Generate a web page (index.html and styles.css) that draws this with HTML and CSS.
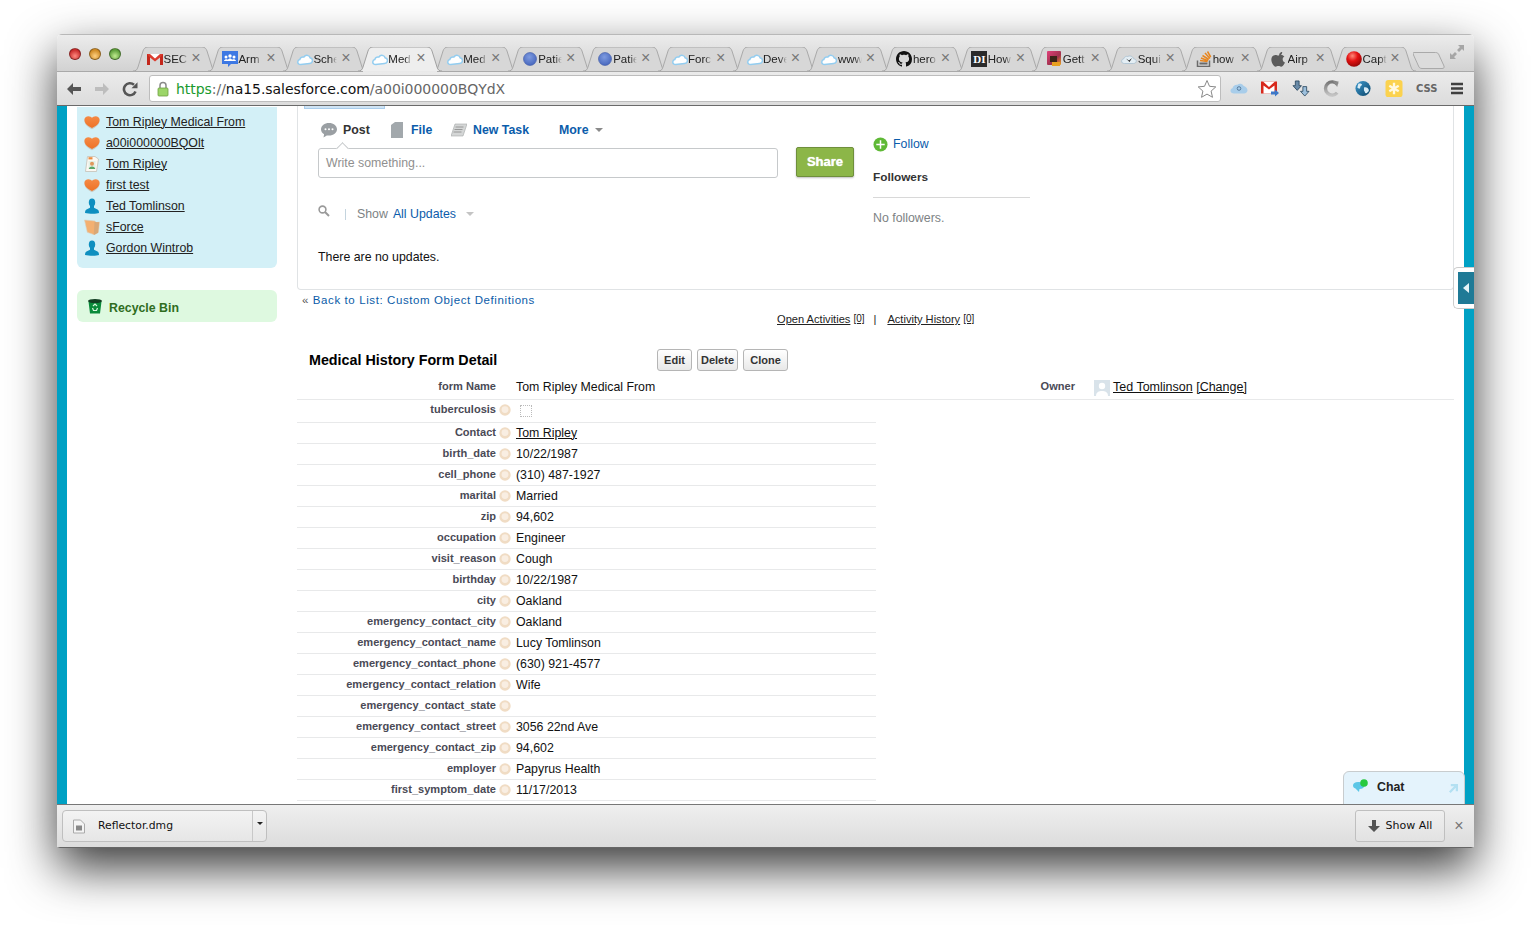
FILE: index.html
```html
<!DOCTYPE html>
<html lang="en">
<head>
<meta charset="utf-8">
<title>Medical History Form</title>
<link rel="stylesheet" href="styles.css">
</head>
<body>
<svg class="defs" aria-hidden="true">
  <defs>
    <radialGradient id="redball" cx=".4" cy=".3" r=".75"><stop offset="0" stop-color="#ff8a7a"/><stop offset=".45" stop-color="#e31212"/><stop offset="1" stop-color="#8d0505"/></radialGradient>
    <radialGradient id="blueball" cx=".45" cy=".35" r=".75"><stop offset="0" stop-color="#7e9be0"/><stop offset="1" stop-color="#3f5fb8"/></radialGradient>
    <linearGradient id="gett" x1="0" y1="0" x2="1" y2="1"><stop offset="0" stop-color="#e0407a"/><stop offset=".6" stop-color="#a0324e"/><stop offset="1" stop-color="#e8a020"/></linearGradient>
    <linearGradient id="heartg" x1="0" y1="0" x2="0" y2="1"><stop offset="0" stop-color="#f58a45"/><stop offset="1" stop-color="#ee7226"/></linearGradient>
    <linearGradient id="globeg" x1="0" y1="0" x2="1" y2="1"><stop offset="0" stop-color="#3f9bd0"/><stop offset="1" stop-color="#0a4468"/></linearGradient>
    <linearGradient id="cring" x1="0" y1="0" x2="0" y2="1"><stop offset="0" stop-color="#777"/><stop offset="1" stop-color="#c4c4c4"/></linearGradient>
    <symbol id="i-tab" viewBox="0 0 84 24"><path d="M0 24c3 0 4-1 5-4L10 4c.6-2 2-4 5-4h54c3 0 4.400 2 5 4l5 16c1 3 2 4 5 4"/></symbol>
    <symbol id="i-cloud" viewBox="0 0 16 16"><path d="M3.600 13.600C1.800 13.600.6 12.400.8 10.800c.1-1.200 1-2 2-2.200.5-1.900 2.200-3 4-2.500C7.700 4.700 9.700 3.900 11.200 4.600c1 .4 1.600 1.200 1.800 2.100 1.500.3 2.500 1.300 2.500 2.700 0 1.700-1.300 2.900-3 3.100z" fill="#fff" stroke="#93cdf0" stroke-width="1.500"/></symbol>
    <symbol id="i-gmail" viewBox="0 0 16 16"><path d="M0 3h16v11H13V6.500L8 10.500 3 6.500V14H0z" fill="#db3b2e"/><path d="M3 3h10L8 7.500z" fill="#fff"/><path d="M0 3l3 3.500V14H0zM16 3l-3 3.500V14h3z" fill="#c4271c"/></symbol>
    <symbol id="i-army" viewBox="0 0 16 16"><path d="M0 0h16v13H9l-3 3v-3H0z" fill="#3d78e3"/><circle cx="4" cy="6" r="1.500" fill="#fff"/><circle cx="8" cy="5" r="1.700" fill="#fff"/><circle cx="12" cy="6" r="1.500" fill="#fff"/><path d="M2 10c0-2 4-2 4-1 0-2 4-2 4 0 0-1 4-1 4 1z" fill="#fff"/></symbol>
    <symbol id="i-ball" viewBox="0 0 16 16"><circle cx="8" cy="8" r="6.500" fill="url(#blueball)" stroke="#3f5aa8" stroke-width=".6"/></symbol>
    <symbol id="i-github" viewBox="0 0 16 16"><path fill="#111" d="M8 0C3.580 0 0 3.580 0 8c0 3.540 2.290 6.530 5.470 7.590.4.070.55-.17.55-.38 0-.19-.01-.82-.01-1.490-2.010.37-2.530-.49-2.690-.94-.09-.23-.48-.94-.82-1.130-.28-.15-.68-.52-.01-.53.63-.01 1.080.58 1.230.82.72 1.210 1.870.87 2.330.66.07-.52.28-.87.51-1.070-1.780-.2-3.640-.89-3.640-3.950 0-.87.31-1.590.82-2.150-.08-.2-.36-1.020.08-2.120 0 0 .67-.21 2.200.82.64-.18 1.320-.27 2-.27s1.360.09 2 .27c1.530-1.040 2.200-.82 2.200-.82.44 1.100.16 1.920.08 2.120.51.56.82 1.270.82 2.150 0 3.070-1.870 3.750-3.650 3.950.29.25.54.73.54 1.480 0 1.070-.01 1.930-.01 2.200 0 .21.15.46.55.38A8.013 8.013 0 0 0 16 8c0-4.420-3.580-8-8-8z"/></symbol>
    <symbol id="i-gett" viewBox="0 0 16 16"><rect x="1" y="0" width="14" height="14" rx="1" fill="url(#gett)"/><rect x="4" y="5" width="7" height="6" fill="#3a2418"/><rect x="6" y="11" width="8" height="4" fill="#e8a020"/></symbol>
    <symbol id="i-squi" viewBox="0 0 16 16"><path d="M3.500 12.500C1.700 12.500.5 11.500.6 10c.1-1.200 1-1.900 2-2 .6-2 2.300-3 4.200-2.500 1.300-.9 3.300-.7 4.500.4.700.6 1 1.200 1.100 1.800 1.500.2 2.900 1 2.900 2.400 0 1.400-1.300 2.400-3 2.400z" fill="#e4eef4" stroke="#a8c0d0" stroke-width=".8"/><path d="M5 7.500l3 2 3-2.500-2.500 4z" fill="#222"/></symbol>
    <symbol id="i-so" viewBox="0 0 16 16"><path d="M1.500 9.500v6h12v-6" fill="none" stroke="#6a6a6a" stroke-width="1.500"/><path d="M3.500 11.500h8v2h-8z" fill="#6a6a6a"/><path d="M4 9.500l7.500 1M5 7l7 2.800M6.500 4.500l6.300 4M9 2l5 5.500M11.500.5l3.200 5.500" stroke="#e8861f" stroke-width="1.500" fill="none"/></symbol>
    <symbol id="i-apple" viewBox="0 0 16 16"><path d="M11.200 1c.1 1-.3 1.900-.8 2.500-.6.700-1.500 1.200-2.300 1.100-.1-1 .3-1.900.8-2.500C9.500 1.400 10.500.9 11.200 1zM14 11.500c-.4.900-.6 1.300-1.100 2-.7 1-1.600 2.300-2.800 2.300-1 0-1.300-.7-2.700-.7s-1.700.7-2.700.7c-1.200 0-2.100-1.100-2.800-2.200C.1 10.800-.1 7.500 1.100 5.800c.8-1.200 2.100-1.900 3.300-1.900s2 .7 3 .7 1.600-.7 3-.7c1.100 0 2.200.6 3 1.600-2.600 1.400-2.200 5.100.6 6z" fill="#5b5b5b"/></symbol>
    <symbol id="i-redball" viewBox="0 0 16 16"><circle cx="8" cy="8" r="7.800" fill="url(#redball)"/></symbol>
    <symbol id="i-heart" viewBox="0 0 18 16"><path d="M9 15.500C5 13.500.5 10.500.5 6 .5 3.500 2.500 2 5 2c1.800 0 3.200.8 4 1.800C9.800 2.800 11.200 2 13 2c2.500 0 4.500 1.500 4.500 4 0 4.500-4.500 7.500-8.500 9.500z" fill="#c9c9c0" transform="translate(0 .6)"/><path d="M9 14.800C5 13 .5 10 .5 5.500.5 3 2.500 1.500 5 1.500c1.800 0 3.200.8 4 1.800.8-1 2.200-1.800 4-1.800 2.500 0 4.500 1.500 4.500 4 0 4.500-4.500 7.500-8.500 9.300z" fill="url(#heartg)"/></symbol>
    <symbol id="i-person" viewBox="0 0 16 16"><ellipse cx="8" cy="4.500" rx="3.200" ry="4" fill="#0e8fc0"/><path d="M6 7.500h4v2.300l3.500 1.700c1 .5 1.500 1.500 1.500 3.500-2 1-10 1-14 0 0-2 .5-3 1.500-3.500L6 9.800z" fill="#0e8fc0"/></symbol>
    <symbol id="i-doc" viewBox="0 0 16 16"><path d="M3.500.5h7.500l3.500 2.500-2 12.500H1.500z" fill="#fbf8f2" stroke="#c4c0b6" stroke-width=".8"/><rect x="4.500" y="5" width="7" height="8" fill="#e4f0e6"/><circle cx="8" cy="7.800" r="2" fill="#e0985c"/><path d="M4.800 13c0-3.400 6.400-3.400 6.400 0z" fill="#5ba768"/><rect x="4.500" y="1.200" width="4" height="2.200" fill="#ee8a3c"/></symbol>
    <symbol id="i-folder" viewBox="0 0 16 16"><path d="M.5 1l10.500 1 1 1.500 3.500-.5-1.200 10.500-4 2.200-7-2.400z" fill="#f3b071" stroke="#d9cfbe" stroke-width=".6"/><path d="M10.500 3l4.500.3-1 10.400-4.200 2.200z" fill="#d9a877"/></symbol>
    <symbol id="i-bin" viewBox="0 0 16 16"><path d="M1.500 3.500h13L13 15.500H3z" fill="#0a8a3a"/><ellipse cx="8" cy="3" rx="7" ry="2" fill="#123f22"/><path d="M6 8l2-2 2 2M10.500 10l-1 2.500H6.500L5.500 10" fill="none" stroke="#d8f5dc" stroke-width="1.200"/></symbol>
    <symbol id="i-help" viewBox="0 0 12 12"><circle cx="6" cy="6" r="5.700" fill="#f0dcc4"/><circle cx="6" cy="5.600" r="3.400" fill="#f9eee2"/></symbol>
  </defs>
</svg>

<div class="window">
  <header class="tabstrip">
    <div class="lights"><span class="light red"></span><span class="light amber"></span><span class="light green"></span></div>
    <nav class="tabs">
      <div class="tab"><svg class="tab-bg"><use href="#i-tab"/></svg><svg class="fav"><use href="#i-gmail"/></svg><span class="tab-title">SEC</span><span class="tab-x">×</span></div>
      <div class="tab"><svg class="tab-bg"><use href="#i-tab"/></svg><svg class="fav"><use href="#i-army"/></svg><span class="tab-title">Arm</span><span class="tab-x">×</span></div>
      <div class="tab"><svg class="tab-bg"><use href="#i-tab"/></svg><svg class="fav"><use href="#i-cloud"/></svg><span class="tab-title">Sche</span><span class="tab-x">×</span></div>
      <div class="tab active"><svg class="tab-bg"><use href="#i-tab"/></svg><svg class="fav"><use href="#i-cloud"/></svg><span class="tab-title">Med</span><span class="tab-x">×</span></div>
      <div class="tab"><svg class="tab-bg"><use href="#i-tab"/></svg><svg class="fav"><use href="#i-cloud"/></svg><span class="tab-title">Med</span><span class="tab-x">×</span></div>
      <div class="tab"><svg class="tab-bg"><use href="#i-tab"/></svg><svg class="fav"><use href="#i-ball"/></svg><span class="tab-title">Patie</span><span class="tab-x">×</span></div>
      <div class="tab"><svg class="tab-bg"><use href="#i-tab"/></svg><svg class="fav"><use href="#i-ball"/></svg><span class="tab-title">Patie</span><span class="tab-x">×</span></div>
      <div class="tab"><svg class="tab-bg"><use href="#i-tab"/></svg><svg class="fav"><use href="#i-cloud"/></svg><span class="tab-title">Forc</span><span class="tab-x">×</span></div>
      <div class="tab"><svg class="tab-bg"><use href="#i-tab"/></svg><svg class="fav"><use href="#i-cloud"/></svg><span class="tab-title">Deve</span><span class="tab-x">×</span></div>
      <div class="tab"><svg class="tab-bg"><use href="#i-tab"/></svg><svg class="fav"><use href="#i-cloud"/></svg><span class="tab-title">www</span><span class="tab-x">×</span></div>
      <div class="tab"><svg class="tab-bg"><use href="#i-tab"/></svg><svg class="fav"><use href="#i-github"/></svg><span class="tab-title">hero</span><span class="tab-x">×</span></div>
      <div class="tab"><svg class="tab-bg"><use href="#i-tab"/></svg><span class="fav di">DI</span><span class="tab-title">How</span><span class="tab-x">×</span></div>
      <div class="tab"><svg class="tab-bg"><use href="#i-tab"/></svg><svg class="fav"><use href="#i-gett"/></svg><span class="tab-title">Gett</span><span class="tab-x">×</span></div>
      <div class="tab"><svg class="tab-bg"><use href="#i-tab"/></svg><svg class="fav"><use href="#i-squi"/></svg><span class="tab-title">Squi</span><span class="tab-x">×</span></div>
      <div class="tab"><svg class="tab-bg"><use href="#i-tab"/></svg><svg class="fav"><use href="#i-so"/></svg><span class="tab-title">how</span><span class="tab-x">×</span></div>
      <div class="tab"><svg class="tab-bg"><use href="#i-tab"/></svg><svg class="fav"><use href="#i-apple"/></svg><span class="tab-title">Airp</span><span class="tab-x">×</span></div>
      <div class="tab"><svg class="tab-bg"><use href="#i-tab"/></svg><svg class="fav"><use href="#i-redball"/></svg><span class="tab-title">Capt</span><span class="tab-x">×</span></div>
      <svg class="newtab" viewBox="0 0 32 17"><path d="M.5.500h22c2 0 3 1 3.500 2.500l5 11c.5 1.500 0 2.500-2 2.500H9c-2 0-3-1-3.500-2.500L.5 3C0 1.500 0 .5.500.5z"/></svg>
    </nav>
    <svg class="fullscreen" viewBox="0 0 14 14"><path d="M14 0v6l-2-2-3 3-2-2 3-3-2-2zM0 14V8l2 2 3-3 2 2-3 3 2 2z"/></svg>
  </header>

  <div class="toolbar">
    <svg class="tb-btn" viewBox="0 0 16 16"><path d="M1 8l6-6v4h8v4H7v4z" fill="#555"/></svg>
    <svg class="tb-btn" viewBox="0 0 16 16"><path d="M15 8L9 2v4H1v4h8v4z" fill="#bdbdbd"/></svg>
    <svg class="tb-btn" viewBox="0 0 16 16"><path d="M13.500 10.500A6 6 0 1 1 12 3.800" fill="none" stroke="#555" stroke-width="2.600"/><path d="M9.500 7.200h6V1.200z" fill="#555"/></svg>
    <div class="omnibox">
      <svg class="lock" viewBox="0 0 12 16"><path d="M3 7V4.500a3 3 0 0 1 6 0V7" fill="none" stroke="#8a8a8a" stroke-width="1.500"/><rect x="1" y="7" width="10" height="8" rx="1" fill="#9bd568" stroke="#6fa043" stroke-width=".8"/></svg>
      <div class="url"><span class="scheme">https</span><span class="dim">://</span>na15.salesforce.com<span class="dim">/a00i000000BQYdX</span></div>
      <svg class="star" viewBox="0 0 20 20"><path d="M10 1.500l2.500 5.800 6.300.6-4.700 4.200 1.400 6.200-5.500-3.200-5.500 3.200 1.400-6.200L1.200 7.900l6.300-.6z" fill="#fff" stroke="#888" stroke-width="1"/></svg>
    </div>
    <div class="extensions">
      <svg class="ext" viewBox="0 0 18 14"><path d="M4 12c-2 0-3.500-1-3.500-2.800C.5 7.800 1.500 7 2.500 6.800 3 4.500 5 3 7.500 3.300 9 1.800 12 2 13.500 4.200 15.500 5 17.500 6.500 17.500 8.800c0 2-1.500 3.200-3.500 3.200z" fill="#a8cdea"/><circle cx="9" cy="7" r="1.800" fill="none" stroke="#4f7395" stroke-width=".9"/></svg>
      <svg class="ext" viewBox="0 0 18 16"><rect x="0" y="1" width="16" height="12" fill="#d8281c"/><path d="M2 1h12L8 6.500zM2.500 5L8 9l5.500-4v8h-11z" fill="#fff"/><path d="M10 11h4V9l4 3.500-4 3.500v-2h-4z" fill="#3d78c8"/></svg>
      <svg class="ext" viewBox="0 0 18 18"><path d="M3 1h4v5h2.500L5 11 .5 6H3z" fill="#6a8ba8" stroke="#1c3a52" stroke-width=".8"/><path d="M11 7h4v5h2.500L13 17l-4.500-5H11z" fill="#9dc0dd" stroke="#1c3a52" stroke-width=".8"/></svg>
      <svg class="ext" viewBox="0 0 18 18"><path d="M14.500 4.500A7 7 0 1 0 14.500 13.500" fill="none" stroke="url(#cring)" stroke-width="3.600"/><path d="M10 1l6 .5-1.500 6z" fill="#8a8a8a"/></svg>
      <svg class="ext" viewBox="0 0 18 18"><circle cx="9" cy="9" r="8" fill="url(#globeg)"/><path d="M4 4c2-1 4 0 4 1s-2 1-2 3-2 1-3 0zM10 8c2-1 4 0 5 2s-2 4-3 4-1-2-2-3z" fill="#d8ecf6"/></svg>
      <svg class="ext" viewBox="0 0 18 18"><rect width="18" height="18" rx="3" fill="#fbd24e"/><path d="M9 3v12M4 6l10 6M14 6L4 12" stroke="#fff8df" stroke-width="2.500"/></svg>
      <span class="ext ext-css">CSS</span>
      <svg class="ext ext-menu" viewBox="0 0 14 14"><path d="M1 2.500h12M1 7h12M1 11.500h12" stroke="#3f3f3f" stroke-width="2.400"/></svg>
    </div>
  </div>

  <main class="viewport">
    <div class="stripe"></div>
    <div class="page">
      <aside class="sidebar">
        <ul class="recent">
          <li><svg class="ri"><use href="#i-heart"/></svg><a>Tom Ripley Medical From</a></li>
          <li><svg class="ri"><use href="#i-heart"/></svg><a>a00i000000BQOlt</a></li>
          <li><svg class="ri"><use href="#i-doc"/></svg><a>Tom Ripley</a></li>
          <li><svg class="ri"><use href="#i-heart"/></svg><a>first test</a></li>
          <li><svg class="ri"><use href="#i-person"/></svg><a>Ted Tomlinson</a></li>
          <li><svg class="ri"><use href="#i-folder"/></svg><a>sForce</a></li>
          <li><svg class="ri"><use href="#i-person"/></svg><a>Gordon Wintrob</a></li>
        </ul>
        <div class="bin"><svg class="bin-i"><use href="#i-bin"/></svg><span class="bin-t">Recycle Bin</span></div>
      </aside>
      <section class="content">
        <div class="chatter">
          <div class="chatter-tab"></div>
          <div class="chatter-cols">
            <div class="feed">
              <div class="publisher">
                <span class="pub pub-post"><svg class="pub-i" viewBox="0 0 16 16"><path d="M8 1c4.400 0 8 2.700 8 6.300s-3.600 6.300-8 6.300c-.8 0-1.500-.1-2.200-.2L2.500 15.500l.6-3.200C1.200 11.200 0 9.400 0 7.300 0 3.700 3.600 1 8 1z" fill="#9a9fa3"/><circle cx="4.500" cy="7.300" r="1" fill="#fff"/><circle cx="8" cy="7.300" r="1" fill="#fff"/><circle cx="11.500" cy="7.300" r="1" fill="#fff"/></svg>Post</span>
                <span class="pub pub-file"><svg class="pub-i doc" viewBox="0 0 12 16"><path d="M0 3l4-3h8v16H0z" fill="#a2a8ac"/></svg>File</span>
                <span class="pub pub-task"><svg class="pub-i" viewBox="0 0 16 16"><path d="M4 2h12l-4 12H0z" fill="#d4d6d6" stroke="#a4a8a8" stroke-width=".6"/><path d="M4.500 5h8M3.500 7.500h8M2.500 10h8" stroke="#888" stroke-width=".8"/></svg>New Task</span>
                <span class="pub pub-more">More<i class="caret"></i></span>
              </div>
              <div class="composer">
                <div class="inputbox"><span class="notch"></span>Write something...</div>
                <button class="share">Share</button>
              </div>
              <div class="filter">
                <svg class="search" viewBox="0 0 12 12"><circle cx="4.500" cy="4.500" r="3.400" fill="none" stroke="#9a9a9a" stroke-width="1.600"/><path d="M7 7l4 4" stroke="#9a9a9a" stroke-width="2"/></svg>
                <span class="vsep"></span>
                <span class="show">Show</span><span class="allup">All Updates</span><i class="caret grey"></i>
              </div>
              <p class="noupdates">There are no updates.</p>
            </div>
            <div class="followers">
              <div class="follow"><svg class="plus" viewBox="0 0 16 16"><circle cx="8" cy="8" r="7.500" fill="#5fb936"/><path d="M8 3.500v9M3.500 8h9" stroke="#fff" stroke-width="1.600"/></svg>Follow</div>
              <div class="fl-title">Followers</div>
              <div class="fl-none">No followers.</div>
            </div>
          </div>
        </div>
        <div class="backlink"><span class="raquo">«</span> Back to List: Custom Object Definitions</div>
        <div class="related"><a>Open Activities</a><a class="cnt">[0]</a><span class="pipe">|</span><a>Activity History</a><a class="cnt">[0]</a></div>
        <div class="detail-head">
          <h2>Medical History Form Detail</h2>
          <div class="btns"><button class="btn btn-edit">Edit</button><button class="btn btn-delete">Delete</button><button class="btn btn-clone">Clone</button></div>
        </div>
        <div class="namerow">
          <div class="lbl">form Name</div><div class="nohelp"></div><div class="val">Tom Ripley Medical From</div>
          <div class="owner-lbl">Owner</div>
          <svg class="avatar" viewBox="0 0 16 16"><rect width="16" height="16" fill="#d9e3ea"/><circle cx="8" cy="6" r="3.200" fill="#fff"/><path d="M2 16c0-4 3-5 6-5s6 1 6 5z" fill="#fff"/></svg>
          <div class="owner"><a>Ted Tomlinson</a> <a>[Change]</a></div>
        </div>
        <div class="rows">
          <div class="row tall"><div class="lbl">tuberculosis</div><svg class="help"><use href="#i-help"/></svg><div class="val"><span class="check"></span></div></div>
          <div class="row"><div class="lbl">Contact</div><svg class="help"><use href="#i-help"/></svg><div class="val"><a>Tom Ripley</a></div></div>
          <div class="row"><div class="lbl">birth_date</div><svg class="help"><use href="#i-help"/></svg><div class="val">10/22/1987</div></div>
          <div class="row"><div class="lbl">cell_phone</div><svg class="help"><use href="#i-help"/></svg><div class="val">(310) 487-1927</div></div>
          <div class="row"><div class="lbl">marital</div><svg class="help"><use href="#i-help"/></svg><div class="val">Married</div></div>
          <div class="row"><div class="lbl">zip</div><svg class="help"><use href="#i-help"/></svg><div class="val">94,602</div></div>
          <div class="row"><div class="lbl">occupation</div><svg class="help"><use href="#i-help"/></svg><div class="val">Engineer</div></div>
          <div class="row"><div class="lbl">visit_reason</div><svg class="help"><use href="#i-help"/></svg><div class="val">Cough</div></div>
          <div class="row"><div class="lbl">birthday</div><svg class="help"><use href="#i-help"/></svg><div class="val">10/22/1987</div></div>
          <div class="row"><div class="lbl">city</div><svg class="help"><use href="#i-help"/></svg><div class="val">Oakland</div></div>
          <div class="row"><div class="lbl">emergency_contact_city</div><svg class="help"><use href="#i-help"/></svg><div class="val">Oakland</div></div>
          <div class="row"><div class="lbl">emergency_contact_name</div><svg class="help"><use href="#i-help"/></svg><div class="val">Lucy Tomlinson</div></div>
          <div class="row"><div class="lbl">emergency_contact_phone</div><svg class="help"><use href="#i-help"/></svg><div class="val">(630) 921-4577</div></div>
          <div class="row"><div class="lbl">emergency_contact_relation</div><svg class="help"><use href="#i-help"/></svg><div class="val">Wife</div></div>
          <div class="row"><div class="lbl">emergency_contact_state</div><svg class="help"><use href="#i-help"/></svg><div class="val"></div></div>
          <div class="row"><div class="lbl">emergency_contact_street</div><svg class="help"><use href="#i-help"/></svg><div class="val">3056 22nd Ave</div></div>
          <div class="row"><div class="lbl">emergency_contact_zip</div><svg class="help"><use href="#i-help"/></svg><div class="val">94,602</div></div>
          <div class="row"><div class="lbl">employer</div><svg class="help"><use href="#i-help"/></svg><div class="val">Papyrus Health</div></div>
          <div class="row"><div class="lbl">first_symptom_date</div><svg class="help"><use href="#i-help"/></svg><div class="val">11/17/2013</div></div>
        </div>
      </section>
    </div>
    <div class="stripe"></div>
    <div class="handle"><span class="handle-in"><i class="handle-arrow"></i></span></div>
    <div class="chat">
      <svg class="chat-i" viewBox="0 0 16 14"><path d="M5 3c-3 0-5 1.500-5 3.500 0 1.500 1 2.500 2.500 3L6 13l.5-3c3-.2 5-1.500 5-3.500S8.500 3 5 3z" fill="#5cc6e6"/><circle cx="11" cy="4" r="3.800" fill="#27c93f"/></svg>
      <span>Chat</span>
      <svg class="chat-arrow" viewBox="0 0 10 10"><path d="M2 0h8v8H7.500V4.300L1.800 10 0 8.200 5.700 2.500H2z" fill="#b3e0f2"/></svg>
    </div>
  </main>

  <footer class="downloads">
    <div class="dl-item">
      <svg class="dl-doc" viewBox="0 0 12 14"><path d="M.5.500h7l4 4v9H.5z" fill="#f4f4f4" stroke="#aaa"/><rect x="3" y="6" width="6" height="5" fill="#888"/></svg>
      <span class="dl-name">Reflector.dmg</span>
      <span class="dl-menu"><i class="caret black"></i></span>
    </div>
    <div class="dl-right">
      <div class="showall"><svg class="sa-i" viewBox="0 0 12 12"><path d="M4 0h4v6h4l-6 6-6-6h4z" fill="#555"/></svg><span class="sa-t">Show All</span></div>
      <span class="dl-x">×</span>
    </div>
  </footer>
</div>
</body>
</html>
```

FILE: styles.css
```css
* { box-sizing: border-box; }
html, body { margin: 0; padding: 0; width: 1531px; height: 927px; overflow: hidden; background: #fff; }
body { font-family: "Liberation Sans", Arial, sans-serif; font-size: 12.35px; color: #111; }
.defs { position: absolute; width: 0; height: 0; }
a { color: inherit; text-decoration: underline; }

.window {
  position: absolute; left: 57px; top: 34px; width: 1417px; height: 814px;
  display: flex; flex-direction: column;
  border-radius: 5px 5px 3px 3px; overflow: hidden;
  box-shadow: 0 20px 48px rgba(0,0,0,.78);
}

/* tab strip */
.tabstrip {
  height: 37px; flex: none; position: relative; z-index: 2;
  background: linear-gradient(#ececec, #d2d2d2);
  border-top: 1px solid #b8b8b8;
  display: flex;
}
.lights { display: flex; gap: 8px; padding: 13px 0 0 12px; width: 76px; flex: none; }
.light { width: 12px; height: 12px; border-radius: 50%; border: 1px solid rgba(0,0,0,.35); }
.light.red { background: radial-gradient(circle at 50% 70%, #ff8a80, #c92c2c 70%); }
.light.amber { background: radial-gradient(circle at 50% 70%, #ffd080, #cf8a24 70%); }
.light.green { background: radial-gradient(circle at 50% 70%, #c0ec90, #5c9e3a 70%); }
.tabs { display: flex; padding-top: 12px; position: relative; }
.tab { width: 74.95px; height: 24px; position: relative; flex: none; font-size: 11.5px; }
.tab-bg { position: absolute; left: 0; top: 0; width: 84px; height: 24px; fill: #d7d7d7; stroke: #a9a9a9; stroke-width: 1; }
.tab.active { z-index: 2; }
.tab.active .tab-bg { fill: #eeeeee; stroke: #a0a0a0; }
.tab.active::after { content: ""; position: absolute; left: 5px; top: 24px; width: 74px; height: 1px; background: #e9e9e9; }
.fav { position: absolute; left: 14px; top: 4px; width: 16px; height: 16px; }
.fav.di { background: #2a2a2a; color: #fff; font: bold 11px/16px "Liberation Serif", serif; text-align: center; }
.tab-title { position: absolute; left: 30.5px; top: 5px; width: 24px; overflow: hidden; white-space: nowrap; line-height: 14px; color: #222;
  -webkit-mask-image: linear-gradient(90deg, #000 70%, transparent); mask-image: linear-gradient(90deg, #000 70%, transparent); }
.tab-x { position: absolute; left: 58px; top: 3px; width: 10px; text-align: center; font: 16px/16px "Liberation Sans", sans-serif; color: #777; }
.newtab { width: 32px; height: 17px; margin: 5px 0 0 6px; flex: none; }
.newtab path { fill: #dcdcdc; stroke: #a9a9a9; }
.fullscreen { position: absolute; right: 10px; top: 10px; width: 14px; height: 14px; fill: #a6a6a6; }

/* toolbar */
.toolbar {
  height: 35px; flex: none; display: flex; align-items: center;
  background: linear-gradient(#ebebeb, #dcdcdc);
  border-top: 1px solid #a9a9a9; border-bottom: 1px solid #6a6a6a;
  padding-left: 9px; position: relative; z-index: 1;
}
.tb-btn { width: 16px; height: 16px; margin-right: 12px; flex: none; }
.omnibox {
  width: 1072px; height: 27px; margin-left: -1px; flex: none; background: #fff; border: 1px solid #bdbdbd; border-radius: 3px;
  display: flex; align-items: center; padding: 0 3px 0 7px; position: relative;
}
.lock { width: 12px; height: 16px; flex: none; margin-right: 7px; }
.url { flex: 1; font: 14px/20px "DejaVu Sans", sans-serif; letter-spacing: -.05px; color: #111; white-space: nowrap; }
.scheme { color: #1a9a2e; }
.dim { color: #666; }
.star { width: 20px; height: 20px; flex: none; }
.extensions { flex: 1; display: flex; align-items: center; gap: 13px; padding-left: 9px; }
.ext { width: 18px; height: 17px; flex: none; }
.ext-css { font: bold 10px/17px "DejaVu Sans", sans-serif; color: #666; text-align: center; }
.ext-menu { width: 14px; margin-left: 3px; }

/* page */
.viewport { flex: 1; min-height: 0; display: flex; position: relative; overflow: hidden; background: #fff; }
.stripe { width: 10px; flex: none; background: #00a1c4; }
.page { flex: 1; min-width: 0; display: flex; background: #fff; }
.sidebar { width: 230px; flex: none; padding: 1px 0 0 10px; }
.recent { list-style: none; margin: 0; padding: 4px 0 9px 7px; width: 200px; height: 161px; background: #d3f0f7; border-radius: 0 0 6px 6px; color: #222; }
.recent li { height: 21px; display: flex; align-items: center; }
.ri { width: 16px; height: 16px; margin-right: 6px; flex: none; }
.bin { margin-top: 22px; width: 200px; height: 32px; background: #def9e0; border-radius: 6px; display: flex; align-items: center; padding-left: 10px; font-weight: bold; color: #2f6d1e; }
.bin-i { width: 16px; height: 16px; margin-right: 6px; }
.bin-t { padding-top: 3px; }

.content { flex: 1; min-width: 0; padding-right: 10px; }
.chatter { height: 184px; border: 1px solid #e0e3e5; border-top: 0; border-radius: 0 0 4px 4px; position: relative; }
.chatter-tab { position: absolute; left: 6px; top: 0; width: 81px; height: 3px; background: #cfe4f5; border: 1px solid #a9cdec; border-top: 0; }
.chatter-cols { display: flex; }
.feed { width: 575px; flex: none; padding: 0 0 0 20px; }
.publisher { height: 42px; position: relative; display: flex; align-items: center; padding-top: 6px; font-weight: bold; color: #0b5cab; }
.pub { display: flex; align-items: center; }
.pub-i { width: 16px; height: 16px; margin-right: 6px; flex: none; }
.pub-i.doc { width: 12px; margin-right: 8px; }
.pub-post { color: #333; margin-left: 3px; width: 70px; }
.pub-file { width: 60px; }
.pub-task { width: 108px; }
.caret { display: inline-block; width: 0; height: 0; border: 4px solid transparent; border-top: 4px solid #8a8a8a; border-bottom: 0; margin-left: 6px; }
.caret.grey { border-top-color: #c4c4c4; }
.caret.black { border-top-color: #222; border-width: 3px; border-bottom: 0; margin: 0; }
.composer { display: flex; gap: 18px; align-items: flex-start; }
.inputbox { width: 460px; height: 30px; border: 1px solid #c6c9cb; border-radius: 3px; padding: 0 7px; line-height: 28px; color: #8f8f8f; position: relative; background: #fff; }
.notch { position: absolute; left: 19px; top: -5px; width: 9px; height: 9px; background: #fff; border: 1px solid #c6c9cb; border-right: 0; border-bottom: 0; transform: rotate(45deg); }
.share { width: 58px; height: 30px; margin-top: -1px; padding: 0 0 2px; border: 1px solid #6f8f3c; border-radius: 2px; background: #8cb648; color: #fff; font: bold 13px "Liberation Sans", sans-serif; text-shadow: 0 0 1px #fff; box-shadow: 0 1px 2px rgba(0,0,0,.25); }
.filter { display: flex; align-items: center; height: 20px; margin-top: 26px; }
.search { width: 12px; height: 12px; margin-right: 15px; flex: none; margin-top: -7px; }
.vsep { width: 1px; height: 11px; background: #c4d4de; margin-right: 11px; }
.show { color: #7d8284; margin-right: 5px; }
.allup { color: #0b5cab; }
.filter .caret { margin-left: 10px; margin-top: -1px; }
.noupdates { margin: 25px 0 0; line-height: 16px; color: #111; }
.followers { width: 157px; flex: none; padding-top: 30px; }
.follow { display: flex; align-items: center; color: #0b5cab; height: 16px; }
.plus { width: 15px; height: 15px; margin-right: 5px; }
.fl-title { font-size: 11.8px; font-weight: bold; color: #333; margin-top: 17px; line-height: 16px; height: 29px; border-bottom: 1px solid #d8d8d8; }
.fl-none { color: #7d8284; margin-top: 12px; line-height: 16px; }

.backlink { margin: 3px 0 0 5px; font-size: 11.5px; line-height: 15px; letter-spacing: .6px; color: #0b5ca8; }
.raquo { color: #555; }
.related { margin-top: 4px; padding-left: 480px; font-size: 11.1px; line-height: 14px; color: #222; display: flex; white-space: pre; }
.cnt { font-size: 10px; margin-left: 3px; }
.pipe { margin: 0 11px 0 9px; }
.detail-head { display: flex; align-items: center; margin-top: 20px; height: 28px; }
.detail-head h2 { margin: 0; padding-left: 12px; width: 360px; font-size: 14.3px; font-weight: bold; color: #000; }
.btns { display: flex; gap: 5px; }
.btn { height: 22px; padding: 0; border: 1px solid #b5b5b5; border-radius: 3px; background: linear-gradient(#fff, #e8e8e8); font: bold 11px "Liberation Sans", sans-serif; color: #333; }
.btn-edit { width: 35px; }
.btn-delete { width: 41px; }
.btn-clone { width: 45px; }
.namerow { display: flex; align-items: center; height: 26px; border-bottom: 1px solid #e8e9ea; }
.lbl { width: 199px; flex: none; margin-top: -2px; text-align: right; font-size: 11.05px; font-weight: bold; color: #4a4a56; }
.nohelp { width: 20px; flex: none; }
.val { width: 360px; flex: none; color: #111; }
.owner-lbl { width: 199px; margin-top: -2px; text-align: right; font-size: 11.05px; font-weight: bold; color: #4a4a56; }
.avatar { width: 16px; height: 16px; margin: 2px 3px 0 19px; flex: none; }
.owner { font-size: 12.5px; }
.rows { width: 579px; }
.row { display: flex; align-items: center; height: 21px; padding-bottom: 1px; border-bottom: 1px solid #e8e9ea; }
.row.tall { height: 23px; padding-bottom: 3px; }
.help { width: 12px; height: 12px; margin: 0 5px 0 3px; flex: none; }
.check { display: block; width: 12px; height: 12px; margin: 3px 0 0 4px; border: 1px dotted #bbb; }

.handle { position: absolute; right: 0; top: 161px; width: 21px; height: 42px; background: #fff; border: 1px solid #ccc; border-right: 0; border-radius: 5px 0 0 5px; padding: 4px 0 4px 4px; }
.handle-in { display: flex; align-items: center; justify-content: center; height: 100%; background: #1f7a96; }
.handle-arrow { width: 0; height: 0; border: 5px solid transparent; border-left: 0; border-right: 6px solid #e6f3f7; }
.chat { position: absolute; right: 9px; bottom: -4px; width: 122px; height: 37px; background: #e4f3fc; border: 1px solid #c8ccce; border-radius: 6px 6px 0 0; display: flex; padding: 7px 0 0 9px; font-weight: bold; color: #222; }
.chat span { line-height: 16px; }
.chat-i { width: 16px; height: 14px; margin-right: 8px; }
.chat-arrow { position: absolute; right: 6px; top: 12px; width: 9px; height: 9px; }

/* downloads */
.downloads { height: 44px; flex: none; display: flex; justify-content: space-between; align-items: center; padding: 0 10px 0 5px; background: linear-gradient(#efefef, #dcdcdc); border-top: 1px solid #777; border-bottom: 1px solid #666; position: relative; }
.dl-item { width: 205px; height: 32px; display: flex; align-items: center; border: 1px solid #bfbfbf; border-radius: 4px; background: linear-gradient(#f3f3f3, #e6e6e6); padding-left: 10px; }
.dl-doc { width: 12px; height: 15px; margin-right: 13px; flex: none; }
.dl-name { flex: 1; font: 10.8px "DejaVu Sans", sans-serif; color: #111; padding-bottom: 2px; }
.dl-menu { width: 14px; height: 30px; border-left: 1px solid #c8c8c8; display: flex; align-items: center; justify-content: center; margin-top: -1px; padding-bottom: 4px; }
.dl-right { display: flex; align-items: center; }
.showall { width: 90px; height: 32px; display: flex; align-items: center; justify-content: center; border: 1px solid #bfbfbf; border-radius: 3px; background: linear-gradient(#efefef, #e2e2e2); font: 11px "DejaVu Sans", sans-serif; color: #111; }
.sa-i { width: 12px; height: 12px; margin-right: 6px; }
.sa-t { padding-bottom: 2px; }
.dl-x { margin-left: 9px; width: 10px; text-align: center; font-size: 16px; color: #777; }
```
